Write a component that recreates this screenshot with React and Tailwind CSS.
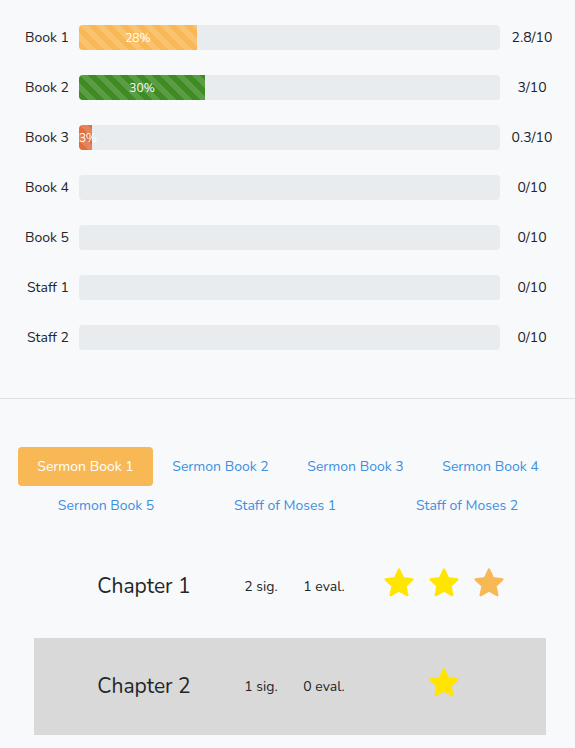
const books = [
  { name: "Book 1", score: 2.8, color: "bg-[#f8b856]" },
  { name: "Book 2", score: 3, color: "bg-[#3f8b24]" },
  { name: "Book 3", score: 0.3, color: "bg-[#e06f3d]" },
  { name: "Book 4", score: 0 },
  { name: "Book 5", score: 0 },
  { name: "Staff 1", score: 0 },
  { name: "Staff 2", score: 0 },
];

const tabsTop = ["Sermon Book 1", "Sermon Book 2", "Sermon Book 3", "Sermon Book 4"];
const tabsBottom = ["Sermon Book 5", "Staff of Moses 1", "Staff of Moses 2"];

const chapters = [
  { name: "Chapter 1", sig: 2, eval: 1, stars: ["#ffe500", "#ffe500", "#f8b856"], shaded: false },
  { name: "Chapter 2", sig: 1, eval: 0, stars: ["#ffe500"], shaded: true },
];

const stripes =
  "bg-[linear-gradient(45deg,rgba(255,255,255,.15)_25%,transparent_25%,transparent_50%,rgba(255,255,255,.15)_50%,rgba(255,255,255,.15)_75%,transparent_75%,transparent)] bg-[length:1rem_1rem]";

function Star({ color }) {
  return (
    <svg width="34" height="34" viewBox="0 0 24 24">
      <path
        d="M12 2.5l2.9 6.1 6.6.8-4.9 4.6 1.3 6.6L12 17.3l-5.9 3.3 1.3-6.6-4.9-4.6 6.6-.8z"
        fill={color}
        stroke={color}
        strokeWidth="1.6"
        strokeLinejoin="round"
      />
    </svg>
  );
}

export default function App() {
  return (
    <div className="min-h-[748px] bg-[#f8f9fb] text-[#212529] font-['Nunito','Noto_Sans',sans-serif]">
      {/* Progress */}
      <div className="pt-[25px] pb-[48px] flex flex-col gap-[25px]">
        {books.map((b) => {
          const pct = Math.round(b.score * 10);
          return (
            <div key={b.name} className="flex items-center h-[25px]">
              <div className="w-[79px] pr-[10px] text-right text-[14px] -mt-[1px]">{b.name}</div>
              <div className="flex-1 h-[25px] rounded-[4px] bg-[#e9ecef] flex">
                {pct > 0 && (
                  <div
                    className={`${b.color} ${stripes} h-full rounded-l-[4px] flex items-center text-white text-[12px] whitespace-nowrap ${
                      pct < 10 ? "justify-start tracking-[-0.5px]" : "justify-center"
                    }`}
                    style={{ width: `${pct}%` }}
                  >
                    {pct}%
                  </div>
                )}
              </div>
              <div className="w-[64px] text-center text-[14px] -mt-[1px]">{b.score}/10</div>
              <div className="w-[11px]" />
            </div>
          );
        })}
      </div>

      <div className="border-t border-[#dee2e6]" />

      {/* Tabs */}
      <div className="pt-[48px] pl-[18px] pr-[17px]">
        <div className="flex">
          {tabsTop.map((t, i) => (
            <div
              key={t}
              className={`flex-auto h-[39px] flex items-center justify-center px-4 text-[14px] rounded-[4px] ${
                i === 0 ? "bg-[#f8b856] text-white" : "text-[#3d8fe0]"
              }`}
            >
              {t}
            </div>
          ))}
        </div>
        <div className="flex">
          {tabsBottom.map((t) => (
            <div key={t} className="flex-auto h-[39px] flex items-center justify-center px-4 text-[14px] text-[#3d8fe0]">
              {t}
            </div>
          ))}
        </div>
      </div>

      {/* Chapters */}
      <div className="pt-[13px] px-[34px] flex flex-col gap-[3px]">
        {chapters.map((c) => (
          <div
            key={c.name}
            className={`h-[97px] w-[512px] flex items-center pl-[20px] ${c.shaded ? "bg-[#d9d9d9]" : ""}`}
          >
            <div className="w-[180px] text-center text-[21px]">{c.name}</div>
            <div className="w-[54px] text-center text-[14px]">{c.sig} sig.</div>
            <div className="ml-[8px] w-[56px] text-center text-[14px]">{c.eval} eval.</div>
            <div className="w-[184px] flex justify-center gap-[11px] -mt-[8px]">
              {c.stars.map((s, i) => (
                <Star key={i} color={s} />
              ))}
            </div>
          </div>
        ))}
      </div>
    </div>
  );
}
